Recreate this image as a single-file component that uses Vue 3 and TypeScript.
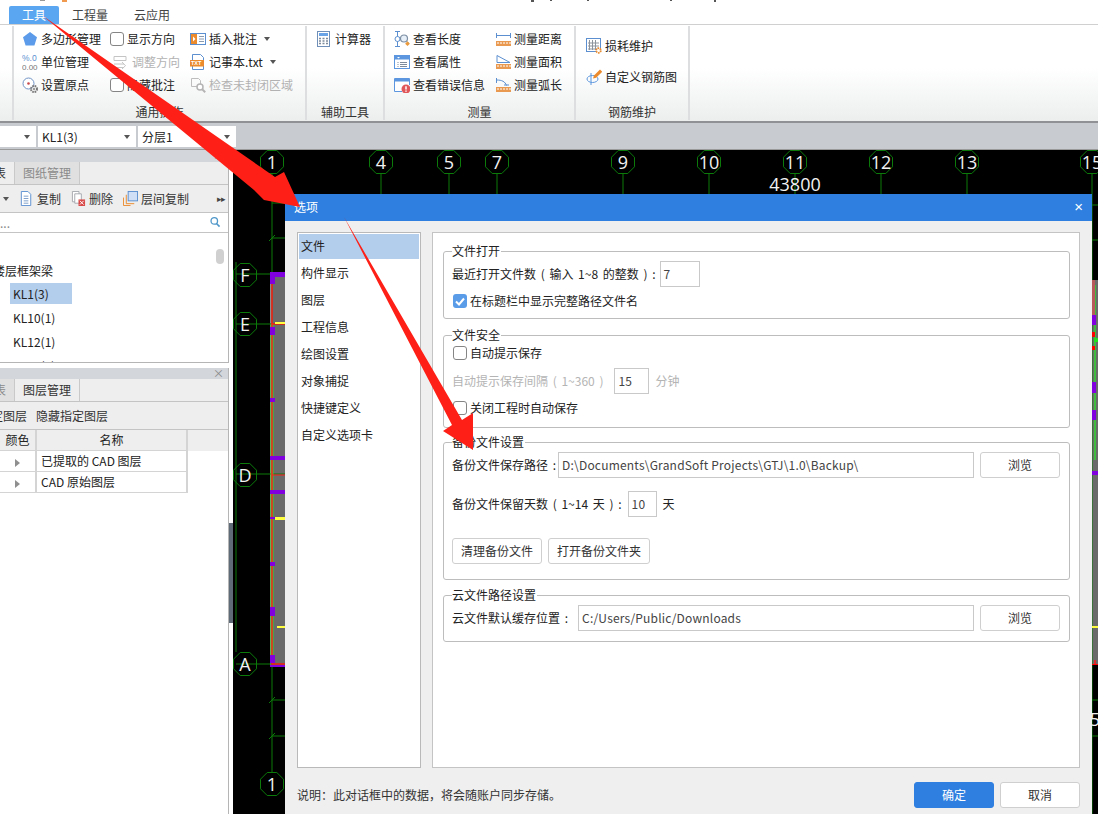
<script setup lang="ts">
const icons: Record<string, string> = {
  pentagon: '<polygon points="8,1 15,6.2 12.4,14.5 3.6,14.5 1,6.2" fill="#5b9bea"/>',
  unit: '<text x="0" y="7" font-size="8.5" font-family="Liberation Sans" fill="#5b8fd0">%.0</text><text x="0" y="15.500" font-size="8" font-family="Liberation Sans" fill="#777">0.00</text>',
  origin: '<circle cx="6.5" cy="6.5" r="5.5" fill="#fff" stroke="#6f92c4"/><circle cx="6.5" cy="6.5" r="1.3" fill="#c9484a"/><circle cx="12" cy="12" r="3" fill="none" stroke="#777" stroke-width="2" stroke-dasharray="1.6 .8"/><circle cx="12" cy="12" r="1.2" fill="#999"/>',
  adjust: '<path d="M2 2.5h12v4H2zM2 10h10M2 13.5h10M10 8l3.500 3.700L10 15" fill="none" stroke="#c4c4c4"/>',
  note: '<rect x=".5" y="2.500" width="15" height="11" fill="#fff" stroke="#5b8fd0"/><rect x="1" y="3" width="6" height="10" fill="#ea8a2c"/><path d="M3 5.500l2.500 2.500L3 10.500z" fill="#fff"/><path d="M9 5.500h5M9 8h5M9 10.500h5" stroke="#8a9bb0"/>',
  txt: '<path d="M2.500.5h8l3 3v12h-11z" fill="#fff" stroke="#5b8fd0"/><rect x="0" y="6" width="14" height="6.500" fill="#ea8a2c"/><text x="1" y="11.300" font-size="5.500" font-weight="700" font-family="Liberation Sans" fill="#fff">TXT</text>',
  check: '<path d="M1.500 1.500h7l2 2v6h-9z" fill="none" stroke="#bdbdbd"/><circle cx="10" cy="10" r="3" fill="#fff" stroke="#b4b4b4" stroke-width="1.500"/><path d="M12.200 12.200l3 3" stroke="#b4b4b4" stroke-width="2"/>',
  calc: '<rect x="1.500" y=".5" width="12" height="15" fill="#fff" stroke="#6f8fb8"/><rect x="3" y="2" width="9" height="3" fill="#6aa3e6"/><path d="M3 7.500h2M6.500 7.500h2M10 7.500h2M3 10h2M6.500 10h2M10 10h2M3 12.500h2M6.500 12.500h2M10 12.500h2" stroke="#7d8b9a" stroke-width="1.300"/>',
  length: '<path d="M3.500 0v16M1 .5h5M1 15.500h5" stroke="#5b8fd0" fill="none"/><circle cx="3.500" cy="8" r="2.500" fill="#fff" stroke="#5b8fd0"/><circle cx="10" cy="7.500" r="3.500" fill="#e6eef8" stroke="#7c8ea3" stroke-width="1.200"/><path d="M13 10.500l1.500 1.500" stroke="#7c8ea3"/><rect x="11.800" y="11" width="3.400" height="3.400" fill="#ea9a3c" transform="rotate(45 13.500 12.700)"/>',
  prop: '<rect x=".5" y="1.500" width="15" height="13" fill="#fff" stroke="#5b96de"/><rect x="1" y="2" width="14" height="3.500" fill="#5b96de"/><path d="M3 3l1.500 1.500L6 3z" fill="#fff"/><path d="M6 8.500h7M6 10.500h7M6 12.500h7M3.500 8.500h1M3.500 10.500h1M3.500 12.500h1" stroke="#7d8b9a"/>',
  err: '<path d="M15.500 8V1.500H.5v13H8" fill="#fff" stroke="#5b96de"/><rect x="1" y="2" width="14" height="2.500" fill="#5b96de"/><circle cx="12" cy="12" r="4.500" fill="#e0575a"/><path d="M12 9.200v3.400M12 13.600v1.200" stroke="#fff" stroke-width="1.500"/>',
  dist: '<path d="M1 4.500h15M1.500 2v5M15.500 2v5" stroke="#5b8fd0" fill="none"/><rect x="1" y="10" width="15" height="5" fill="#ea9a50"/><path d="M3 11v2M6 11v2M9 11v2M12 11v2M15 11v2" stroke="#fff"/>',
  area: '<path d="M2 1.500v7h13z" fill="#fff" stroke="#5b8fd0"/><rect x="1" y="10" width="15" height="5" fill="#ea9a50"/><path d="M3 11v2M6 11v2M9 11v2M12 11v2M15 11v2" stroke="#fff"/>',
  arc: '<path d="M1.500 1v5M1.500 3C7 3 10 4.500 11.500 8.500M9 8h5" fill="none" stroke="#5b8fd0"/><rect x="1" y="10" width="15" height="5" fill="#ea9a50"/><path d="M3 11v2M6 11v2M9 11v2M12 11v2M15 11v2" stroke="#fff"/>',
  wear: '<rect x=".5" y=".5" width="14" height="13" fill="#fff" stroke="#5b8fd0"/><path d="M3.500 2v10M6.500 2v10M9.500 2v10M2 5h11M2 8h11M2 11h11" stroke="#8d949c"/><circle cx="12.500" cy="12.500" r="2.300" fill="#fff" stroke="#ea8a2c" stroke-width="1.800" stroke-dasharray="1.500 .7"/>',
  custom: '<ellipse cx="6.500" cy="10" rx="5.500" ry="3.500" fill="none" stroke="#5b96de"/><path d="M5 4v12" stroke="#5b96de"/><path d="M7 9.500l1-3 6-6 2.200 2.200-6 6z" fill="#ea8a2c"/>',
  copy: '<path d="M2.500.5h7l3 3v12h-10z" fill="#fff" stroke="#5b8fd0"/><path d="M5 5.500h5M5 8h5M5 10.500h5M5 13h5" stroke="#7a9cc8"/>',
  del: '<path d="M1.500.5h7v11h-7z" fill="#fff" stroke="#a4a8ad"/><path d="M4 3h7v10H4z" fill="#fff" stroke="#a4a8ad"/><rect x="8" y="9" width="7" height="7" fill="#d84a4a"/><path d="M9.500 10.500l4 4M13.500 10.500l-4 4" stroke="#fff"/>',
  floor: '<rect x="5.500" y=".5" width="10" height="10" fill="#cfe0f6" stroke="#5b8fd0"/><path d="M3.500 4v9.500H12M.5 7v8.500H8" fill="none" stroke="#ea8a2c"/>',
  search: '<circle cx="6.500" cy="6" r="4" fill="none" stroke="#4f97c9" stroke-width="1.600"/><path d="M9.500 9.500l3.500 3.500" stroke="#4f97c9" stroke-width="2"/>'
}

type Item = { label: string; icon?: string; box?: boolean; off?: boolean; caret?: boolean }

const ribbon: { title: string; width: number; cls: string; items: Item[] }[] = [
  {
    title: '通用操作', width: 295, cls: 'g-main', items: [
      { label: '多边形管理', icon: 'pentagon' },
      { label: '显示方向', box: true },
      { label: '插入批注', icon: 'note', caret: true },
      { label: '单位管理', icon: 'unit' },
      { label: '调整方向', icon: 'adjust', off: true },
      { label: '记事本.txt', icon: 'txt', caret: true },
      { label: '设置原点', icon: 'origin' },
      { label: '隐藏批注', box: true },
      { label: '检查未封闭区域', icon: 'check', off: true }
    ]
  },
  { title: '辅助工具', width: 78, cls: 'g-calc', items: [{ label: '计算器', icon: 'calc' }] },
  {
    title: '测量', width: 191, cls: 'g-measure', items: [
      { label: '查看长度', icon: 'length' },
      { label: '测量距离', icon: 'dist' },
      { label: '查看属性', icon: 'prop' },
      { label: '测量面积', icon: 'area' },
      { label: '查看错误信息', icon: 'err' },
      { label: '测量弧长', icon: 'arc' }
    ]
  },
  {
    title: '钢筋维护', width: 114, cls: 'g-rebar', items: [
      { label: '损耗维护', icon: 'wear' },
      { label: '自定义钢筋图', icon: 'custom' }
    ]
  }
]

const optionTabs = ['文件', '构件显示', '图层', '工程信息', '绘图设置', '对象捕捉', '快捷键定义', '自定义选项卡']

const topAxes = [
  { t: '1', x: 272 }, { t: '4', x: 381 }, { t: '5', x: 449 }, { t: '7', x: 497 }, { t: '9', x: 623 },
  { t: '10', x: 709 }, { t: '11', x: 795 }, { t: '12', x: 881 }, { t: '13', x: 967 }, { t: '15', x: 1092 }
]
const sideAxes = [
  { t: 'F', y: 275 }, { t: 'E', y: 324 }, { t: 'D', y: 475 }, { t: 'A', y: 664 }
]
const octagon = (x: number, y: number) => {
  const pts: string[] = []
  for (let i = 0; i < 8; i++) {
    const a = Math.PI / 8 + (i * Math.PI) / 4
    pts.push(`${(x + 12.5 * Math.cos(a)).toFixed(1)},${(y + 12.5 * Math.sin(a)).toFixed(1)}`)
  }
  return pts.join(' ')
}
// coloured rebar marks along the left and right edges of the drawing
const marks = [
  { x: 270, y: 272, w: 15, h: 5, c: '#8000e0' }, { x: 270, y: 277, w: 5, h: 7, c: '#8000e0' },
  { x: 275, y: 322, w: 10, h: 2, c: '#ffff40' }, { x: 270, y: 327, w: 5, h: 8, c: '#8000e0' },
  { x: 270, y: 398, w: 5, h: 4, c: '#8000e0' }, { x: 270, y: 456, w: 15, h: 4, c: '#8000e0' },
  { x: 270, y: 490, w: 15, h: 4, c: '#8000e0' }, { x: 270, y: 517, w: 5, h: 2, c: '#8000e0' },
  { x: 275, y: 517, w: 10, h: 3, c: '#ffff40' }, { x: 270, y: 562, w: 5, h: 4, c: '#8000e0' },
  { x: 270, y: 607, w: 5, h: 9, c: '#8000e0' }, { x: 277, y: 626, w: 8, h: 2, c: '#ffff40' },
  { x: 270, y: 655, w: 5, h: 8, c: '#8000e0' }, { x: 270, y: 665, w: 15, h: 2, c: '#8000e0' },
  { x: 1092, y: 280, w: 3, h: 40, c: '#b85a5a' }, { x: 1092, y: 315, w: 4, h: 10, c: '#8000e0' },
  { x: 1092, y: 332, w: 3, h: 5, c: '#ff0000' }, { x: 1094, y: 338, w: 4, h: 4, c: '#20e020' },
  { x: 1092, y: 346, w: 3, h: 4, c: '#ff0000' }, { x: 1092, y: 382, w: 4, h: 11, c: '#8000e0' },
  { x: 1092, y: 410, w: 4, h: 10, c: '#8000e0' }, { x: 1092, y: 471, w: 6, h: 4, c: '#8000e0' },
  { x: 1092, y: 626, w: 6, h: 2, c: '#ffff40' }, { x: 1092, y: 664, w: 6, h: 1, c: '#ff0000' }
]
</script>

<template>
  <div class="app">
    <div class="crumbs"></div>
    <div class="menu">
      <span class="menu-tab active">工具</span>
      <span class="menu-tab">工程量</span>
      <span class="menu-tab">云应用</span>
    </div>

    <div class="ribbon">
      <div v-for="g in ribbon" :key="g.title" class="r-group" :class="g.cls" :style="{ width: g.width + 'px' }">
        <div class="r-items">
          <div v-for="it in g.items" :key="it.label" class="r-item" :class="{ off: it.off }">
            <span v-if="it.box" class="box"></span>
            <svg v-else class="ico" viewBox="0 0 16 16" v-html="icons[it.icon!]"></svg>
            <span>{{ it.label }}</span>
            <span v-if="it.caret" class="caret"></span>
          </div>
        </div>
        <div class="r-title">{{ g.title }}</div>
      </div>
    </div>

    <div class="combos">
      <div class="combo c0"><span class="caret"></span></div>
      <div class="combo"><span>KL1(3)</span><span class="caret"></span></div>
      <div class="combo"><span>分层1</span><span class="caret"></span></div>
    </div>

    <div class="work">
      <aside class="side">
        <section class="dock top-dock">
          <div class="dock-head"><span class="x">×</span></div>
          <div class="tabs">
            <span class="tab stub on">表</span>
            <span class="tab name">图纸管理</span>
          </div>
          <div class="tools">
            <span class="caret tool-caret"></span>
            <span class="tool"><svg class="ico" viewBox="0 0 16 16" v-html="icons.copy"></svg>复制</span>
            <span class="tool"><svg class="ico" viewBox="0 0 16 16" v-html="icons.del"></svg>删除</span>
            <span class="tool"><svg class="ico" viewBox="0 0 16 16" v-html="icons.floor"></svg>层间复制</span>
            <span class="more">▸▸</span>
          </div>
          <div class="search">
            <span>...</span>
            <svg class="ico" viewBox="0 0 16 16" v-html="icons.search"></svg>
          </div>
          <div class="tree">
            <div class="tree-root">楼层框架梁</div>
            <div class="leaf sel">KL1(3)</div>
            <div class="leaf">KL10(1)</div>
            <div class="leaf">KL12(1)</div>
            <div class="leaf">KL13(1)</div>
            <span class="thumb"></span>
          </div>
        </section>

        <section class="dock layer-dock">
          <div class="dock-head"><span class="x">×</span></div>
          <div class="tabs">
            <span class="tab stub">表</span>
            <span class="tab name on">图层管理</span>
          </div>
          <div class="tools layer-tools">
            <span class="cut">指定图层</span>
            <span>隐藏指定图层</span>
          </div>
          <div class="t-row t-head">
            <span class="c1">颜色</span><span class="c2">名称</span>
          </div>
          <div class="t-row">
            <span class="c1"><i class="tri"></i></span><span class="c2 left">已提取的 CAD 图层</span>
          </div>
          <div class="t-row">
            <span class="c1"><i class="tri"></i></span><span class="c2 left">CAD 原始图层</span>
          </div>
        </section>
      </aside>

      <div class="splitter"><span class="grip"></span></div>

      <div class="cad">
        <svg class="cad-svg" viewBox="233 150 865 664">
          <rect x="270" y="272" width="15" height="394" fill="#6a6a6a" />
          <rect x="270" y="272" width="2" height="394" fill="#8c8c8c" />
          <rect x="1092" y="280" width="6" height="385" fill="#6a6a6a" />

          <g stroke="#0b7a0b" fill="none">
            <path d="M236 262V652M272 174V772M236 274H285M236 324H285M236 474H285M236 664H285" />
            <path d="M272 203H285M272 238H285M272 700H285M272 736H285" />
            <path d="M269 241l6-6M269 703l6-6M269 739l6-6" />
            <path d="M381 174V194M449 174V194M497 174V194M623 174V194M709 174V194M795 174V194M881 174V194M967 174V194M1092 174V814" />
            <path d="M1092 205H1098M1092 240H1098M1092 700H1098M1092 736H1098" />
            <polygon v-for="a in topAxes" :key="a.t" :points="octagon(a.x, 162)" />
            <polygon v-for="a in sideAxes" :key="a.t" :points="octagon(245, a.y)" />
            <polygon :points="octagon(272, 784)" />
          </g>
          <path d="M272 324V660" stroke="#2fd82f" stroke-width="3" />
          <path d="M1095 285V460" stroke="#2fd82f" stroke-width="1.500" />
          <path d="M272 275V664H285M272 274H285M272 324H285M1095 660V664" stroke="#ff1a1a" stroke-width="1.500" fill="none" />
          <path d="M272 475H285" stroke="#ff1a1a" />
          <rect v-for="(m, i) in marks" :key="i" :x="m.x" :y="m.y" :width="m.w" :height="m.h" :fill="m.c" />

          <g class="cad-text">
            <text v-for="a in topAxes" :key="a.t" :x="a.x" y="169">{{ a.t }}</text>
            <text v-for="a in sideAxes" :key="a.t" x="245" :y="a.y + 7">{{ a.t }}</text>
            <text x="272" y="791">1</text>
            <text x="795" y="191">43800</text>
            <text x="1100" y="726">50</text>
          </g>
        </svg>

        <div class="dialog">
          <div class="d-title"><span>选项</span><span class="d-close">×</span></div>
          <div class="d-body">
            <ul class="d-list">
              <li v-for="(t, i) in optionTabs" :key="t" :class="{ on: i === 0 }">{{ t }}</li>
            </ul>
            <div class="d-panel">
              <div class="grp g1">
                <span class="legend">文件打开</span>
                <div class="row">
                  <span>最近打开文件数 ( 输入 1~8 的整数 ) :</span>
                  <span class="inp recent">7</span>
                </div>
                <div class="row chk">
                  <span class="box checked">
                    <svg viewBox="0 0 14 14"><path d="M3 7.500l3 3 5-6" fill="none" stroke="#fff" stroke-width="2" /></svg>
                  </span>
                  <span>在标题栏中显示完整路径文件名</span>
                </div>
              </div>

              <div class="grp g2">
                <span class="legend">文件安全</span>
                <div class="row chk"><span class="box"></span><span>自动提示保存</span></div>
                <div class="row mute">
                  <span>自动提示保存间隔 ( 1~360 )</span>
                  <span class="inp interval">15</span>
                  <span>分钟</span>
                </div>
                <div class="row chk"><span class="box"></span><span>关闭工程时自动保存</span></div>
              </div>

              <div class="grp g3">
                <span class="legend">备份文件设置</span>
                <div class="row">
                  <span>备份文件保存路径 :</span>
                  <span class="inp grow path-a">D:\Documents\GrandSoft Projects\GTJ\1.0\Backup\</span>
                  <button class="btn browse">浏览</button>
                </div>
                <div class="row days">
                  <span>备份文件保留天数 ( 1~14 天 ) :</span>
                  <span class="inp keep">10</span>
                  <span>天</span>
                </div>
                <div class="row actions">
                  <button class="btn">清理备份文件</button>
                  <button class="btn">打开备份文件夹</button>
                </div>
              </div>

              <div class="grp g4">
                <span class="legend">云文件路径设置</span>
                <div class="row">
                  <span>云文件默认缓存位置 :</span>
                  <span class="inp grow path-b">C:/Users/Public/Downloads</span>
                  <button class="btn browse">浏览</button>
                </div>
              </div>
            </div>
          </div>
          <div class="d-foot">
            <span class="note">说明：此对话框中的数据，将会随账户同步存储。</span>
            <button class="btn big primary">确定</button>
            <button class="btn big">取消</button>
          </div>
        </div>
      </div>
    </div>

    <svg class="arrows" viewBox="0 0 1098 814">
      <polygon points="43,16 275,177 284,172 300,207 264,200 254,190" fill="#fe2016" />
      <polygon points="344,217 462,420 473,413 473,450 443,431 452,425" fill="#fe2016" />
    </svg>
  </div>
</template>

<style>
html,
body {
  margin: 0;
  background: #fff;
}
</style>

<style scoped>
.app {
  position: relative;
  width: 1098px;
  height: 814px;
  overflow: hidden;
  display: flex;
  flex-direction: column;
  font-family: "Noto Sans CJK SC", "Liberation Sans", sans-serif;
  font-size: 12px;
  line-height: 16px;
  color: #222;
}

.crumbs {
  height: 3px;
  background:
    linear-gradient(#f09a50, #f09a50) 62px 0 / 5px 2px no-repeat,
    linear-gradient(#999, #999) 40px 0 / 5px 1px no-repeat,
    linear-gradient(#555, #555) 531px 0 / 3px 2px no-repeat,
    linear-gradient(#555, #555) 550px 0 / 2px 1px no-repeat,
    linear-gradient(#555, #555) 587px 0 / 2px 1px no-repeat,
    linear-gradient(#555, #555) 670px 0 / 2px 1px no-repeat,
    linear-gradient(#555, #555) 714px 0 / 2px 2px no-repeat;
}

.menu {
  height: 22px;
  box-sizing: border-box;
  display: flex;
  align-items: flex-end;
  padding-left: 9px;
  border-bottom: 1px solid #d0d0d0;
}

.menu-tab {
  height: 18px;
  line-height: 18px;
  padding: 0 13px 0 0;
  margin-left: 13px;
  color: #444;
}

.menu-tab.active {
  width: 50px;
  margin-left: 0;
  padding: 0;
  text-align: center;
  color: #fff;
  background: #5ba6f0;
  border-radius: 2px 2px 0 0;
}

.ribbon {
  height: 98px;
  display: flex;
  padding-left: 12px;
  border-bottom: 2px solid #8f9194;
  background: linear-gradient(#fff 45%, #eceeee);
  box-sizing: border-box;
}

.r-group {
  flex: none;
  display: flex;
  flex-direction: column;
  justify-content: space-between;
  box-sizing: border-box;
  margin-top: 1px;
  height: 94px;
  border-right: 2px solid #dcdedf;
}

.r-group:first-child {
  border-left: 2px solid #dcdedf;
}

.r-items {
  display: grid;
  grid-auto-rows: 23px;
  padding-top: 1px;
}

.g-main .r-items {
  grid-template-columns: 88px 80px auto;
  padding-left: 8px;
}

.g-calc .r-items {
  padding-left: 9px;
}

.g-measure .r-items {
  grid-template-columns: 101px auto;
  padding-left: 9px;
}

.g-rebar .r-items {
  grid-auto-rows: 31px;
  padding: 4px 0 0 10px;
}

.r-item {
  display: flex;
  align-items: center;
  gap: 3px;
  white-space: nowrap;
}

.r-item.off {
  color: #b2b2b2;
}

.g-main .r-item:nth-child(5) .ico {
  margin: 0 1px 0 2px;
}

.r-title {
  text-align: center;
  color: #333;
  height: 16px;
}

.ico {
  flex: none;
  width: 16px;
  height: 16px;
}

.caret {
  display: inline-block;
  width: 0;
  height: 0;
  border: 3.5px solid transparent;
  border-top: 4px solid #555;
  border-bottom: 0;
  margin-left: 4px;
}

.box {
  flex: none;
  box-sizing: border-box;
  width: 14px;
  height: 14px;
  border: 1px solid #858585;
  border-radius: 3px;
  background: #fff;
}

.box.checked {
  border: 0;
  background: #5a9ce8;
}

.box svg {
  display: block;
}

.combos {
  height: 27px;
  box-sizing: border-box;
  display: flex;
  gap: 2px;
  padding-top: 3px;
  background: #c8cbd0;
  border-bottom: 1px solid #9a9a9a;
}

.combo {
  width: 98px;
  height: 21px;
  padding: 0 4px;
  box-sizing: border-box;
  background: #fff;
  display: flex;
  align-items: center;
  justify-content: space-between;
}

.combo .caret {
  margin-right: 2px;
}

.combo.c0 {
  width: 36px;
  justify-content: flex-end;
}

.work {
  flex: 1;
  min-height: 0;
  display: flex;
}

.side {
  width: 229px;
  flex: none;
  display: flex;
  flex-direction: column;
  background: #fff;
}

.dock {
  border-right: 1px solid #b5b5b5;
  box-sizing: border-box;
}

.top-dock {
  height: 213px;
  flex: none;
  border-bottom: 1px solid #b5b5b5;
  overflow: hidden;
}

.layer-dock {
  flex: 1;
  margin-top: 5px;
}

.dock-head {
  height: 11px;
  background: #d3d6da;
  position: relative;
}

.top-dock .dock-head {
  height: 12px;
}

.x {
  position: absolute;
  right: 4px;
  top: 0;
  color: #888;
  font-size: 11px;
  line-height: 11px;
}

.tabs {
  height: 23px;
  display: flex;
  background: #eeeeee;
  border-bottom: 1px solid #c4c4c4;
  box-sizing: border-box;
}

.tab {
  height: 22px;
  line-height: 22px;
  background: #e0e0e0;
  color: #8a8a8a;
  border-right: 1px solid #c9c9c9;
}

.tab.on {
  background: #eeeeee;
  color: #333;
}

.tab.stub {
  width: 14px;
  text-indent: -6px;
  overflow: hidden;
}

.tab.name {
  width: 64px;
  text-align: center;
}

.tools {
  height: 28px;
  box-sizing: border-box;
  display: flex;
  align-items: center;
  background: #eeeeee;
  border-bottom: 1px solid #c4c4c4;
  position: relative;
  color: #333;
}

.tool-caret {
  margin: 0 10px 0 3px;
}

.tool {
  display: flex;
  align-items: center;
  gap: 3px;
  margin-right: 10px;
}

.tool .ico {
  width: 15px;
  height: 15px;
}

.more {
  position: absolute;
  right: 3px;
  font-size: 9px;
  letter-spacing: -1px;
  color: #444;
}

.search {
  height: 19px;
  display: flex;
  align-items: center;
  justify-content: space-between;
  border-bottom: 1px solid #c4c4c4;
  padding-right: 6px;
  color: #888;
}

.search .ico {
  width: 13px;
  height: 13px;
}

.tree {
  position: relative;
  padding-top: 30px;
  color: #222;
}

.tree-root {
  height: 20px;
  margin-left: -7px;
}

.leaf {
  height: 21px;
  line-height: 21px;
  margin: 0 0 3px 10px;
  padding-left: 3px;
  width: 59px;
}

.leaf.sel {
  background: #b3cdec;
}

.thumb {
  position: absolute;
  right: 4px;
  top: 16px;
  width: 8px;
  height: 15px;
  border-radius: 4px;
  background: #d0d0d0;
}

.layer-tools {
  gap: 9px;
}

.cut {
  margin-left: -21px;
}

.t-row {
  display: flex;
  height: 21px;
  line-height: 20px;
}

.t-head {
  height: 21px;
  background: #eeeeee;
}

.c1,
.c2 {
  box-sizing: border-box;
  text-align: center;
  border-right: 2px solid #d4d4d4;
  border-bottom: 1px solid #d4d4d4;
}

.c1 {
  width: 37px;
}

.c2 {
  width: 151px;
}

.c2.left {
  text-align: left;
  padding-left: 4px;
}

.tri {
  display: inline-block;
  border: 4.5px solid transparent;
  border-left: 5px solid #8f8f8f;
  border-right: 0;
  vertical-align: -1px;
}

.splitter {
  width: 4px;
  flex: none;
  background: #fff;
  position: relative;
}

.grip {
  position: absolute;
  left: 0;
  top: 373px;
  width: 4px;
  height: 100px;
  background: #5f6b76;
}

.cad {
  flex: 1;
  position: relative;
  background: #000;
  overflow: hidden;
}

.cad-svg {
  display: block;
  width: 865px;
  height: 664px;
}

.cad-text text {
  fill: #f2f2f2;
  font-family: "Open Sans", sans-serif;
  font-size: 18px;
  text-anchor: middle;
}

.dialog {
  position: absolute;
  left: 52px;
  top: 44px;
  width: 807px;
  height: 620px;
  display: flex;
  flex-direction: column;
  background: #efefef;
}

.d-title {
  height: 27px;
  flex: none;
  box-sizing: border-box;
  padding: 0 9px 2px;
  display: flex;
  align-items: center;
  justify-content: space-between;
  background: #2e7fe0;
  color: #fff;
}

.d-close {
  font-size: 15px;
  font-family: "Liberation Sans", sans-serif;
}

.d-body {
  flex: 1;
  min-height: 0;
  display: flex;
  gap: 11px;
  padding: 11px 12px 0;
}

.d-list {
  flex: none;
  width: 124px;
  box-sizing: border-box;
  margin: 0;
  padding: 1px;
  list-style: none;
  background: #fff;
  border: 1px solid #b9b9b9;
}

.d-list li {
  height: 27px;
  line-height: 26px;
  padding-left: 2px;
}

.d-list li.on {
  height: 25px;
  line-height: 24px;
  margin-bottom: 1px;
  background: #b3cdec;
}

.d-panel {
  flex: 1;
  min-width: 0;
  box-sizing: border-box;
  padding: 18px 9px 0 10px;
  background: #fff;
  border: 1px solid #c4c4c4;
  word-spacing: 2px;
}

.grp {
  position: relative;
  box-sizing: border-box;
  border: 1px solid #bdbdbd;
  border-radius: 3px;
  padding: 9px 9px 0 8px;
  display: flex;
  flex-direction: column;
}

.legend {
  position: absolute;
  left: 8px;
  top: -9px;
  padding: 0 1px 0 0;
  background: #fff;
}

.g1 {
  height: 68px;
  margin-bottom: 16px;
}

.g2 {
  height: 93px;
  padding-top: 4px;
  margin-bottom: 14px;
}

.g3 {
  height: 138px;
  margin-bottom: 15px;
}

.g4 {
  height: 47px;
}

.row {
  flex: none;
  display: flex;
  align-items: center;
  white-space: nowrap;
  height: 26px;
}

.g1 .chk {
  height: 28px;
}

.g2 .mute {
  margin: 2px 0 1px;
}

.chk {
  gap: 3px;
  padding-left: 1px;
}

.mute {
  color: #b4b4b4;
  gap: 6px;
}

.inp {
  box-sizing: border-box;
  height: 26px;
  line-height: 24px;
  padding: 0 3px;
  border: 1px solid #c9c9c9;
  background: #fff;
  color: #444;
  letter-spacing: 0.2px;
  word-spacing: 0;
}

.recent {
  flex: none;
  width: 40px;
  margin-left: 4px;
}

.interval {
  width: 35px;
  margin-left: 5px;
}

.keep {
  width: 29px;
  margin: 0 6px;
}

.grow {
  flex: 1;
  margin: 0 6px 0 2px;
}

.path-b {
  margin-left: 10px;
}

.btn {
  font: inherit;
  word-spacing: 0;
  color: #333;
  height: 26px;
  padding: 0 8px;
  box-sizing: border-box;
  background: #fff;
  border: 1px solid #cfcfcf;
  border-radius: 3px;
}

.browse {
  width: 80px;
}

.days {
  margin-top: 13px;
}

.actions {
  gap: 6px;
  margin-top: 21px;
}

.d-foot {
  height: 46px;
  flex: none;
  box-sizing: border-box;
  display: flex;
  align-items: center;
  gap: 6px;
  padding: 8px 12px 0;
}

.note {
  flex: 1;
  color: #333;
}

.big {
  width: 80px;
}

.primary {
  background: #2e7fe0;
  border-color: #2e7fe0;
  color: #fff;
}

.arrows {
  position: absolute;
  left: 0;
  top: 0;
  width: 1098px;
  height: 814px;
  pointer-events: none;
}
</style>
